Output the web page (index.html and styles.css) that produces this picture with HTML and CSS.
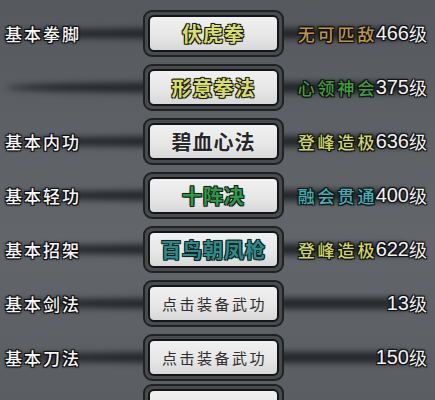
FILE: index.html
```html
<!DOCTYPE html>
<html lang="zh">
<head>
<meta charset="utf-8">
<link rel="stylesheet" href="styles.css">
</head>
<body>
<div class="list">
  <div class="row">
    <div class="label">基本拳脚</div>
    <div class="btn"><div class="face c-yellow">伏虎拳</div></div>
    <div class="value"><span class="rank r-gold">无可匹敌</span><span class="num">466</span><span class="ji">级</span></div>
  </div>
  <div class="row">
    <div class="label"></div>
    <div class="btn"><div class="face c-yellow">形意拳法</div></div>
    <div class="value"><span class="rank r-green">心领神会</span><span class="num">375</span><span class="ji">级</span></div>
  </div>
  <div class="row">
    <div class="label">基本内功</div>
    <div class="btn"><div class="face c-dark">碧血心法</div></div>
    <div class="value"><span class="rank r-lime">登峰造极</span><span class="num">636</span><span class="ji">级</span></div>
  </div>
  <div class="row">
    <div class="label">基本轻功</div>
    <div class="btn"><div class="face c-green">十阵决</div></div>
    <div class="value"><span class="rank r-teal">融会贯通</span><span class="num">400</span><span class="ji">级</span></div>
  </div>
  <div class="row">
    <div class="label">基本招架</div>
    <div class="btn"><div class="face c-teal">百鸟朝凤枪</div></div>
    <div class="value"><span class="rank r-lime">登峰造极</span><span class="num">622</span><span class="ji">级</span></div>
  </div>
  <div class="row">
    <div class="label">基本剑法</div>
    <div class="btn"><div class="face c-empty">点击装备武功</div></div>
    <div class="value"><span class="num">13</span><span class="ji">级</span></div>
  </div>
  <div class="row">
    <div class="label">基本刀法</div>
    <div class="btn"><div class="face c-empty">点击装备武功</div></div>
    <div class="value"><span class="num">150</span><span class="ji">级</span></div>
  </div>
  <div class="row row-cut">
    <div class="label"></div>
    <div class="btn"><div class="face c-empty"></div></div>
    <div class="value"></div>
  </div>
</div>
</body>
</html>
```

FILE: styles.css
```css
html, body {
  margin: 0;
  padding: 0;
}
body {
  width: 435px;
  height: 400px;
  overflow: hidden;
  background: linear-gradient(180deg, #55595d 0%, #5e6267 35%, #62666b 60%, #5a5e62 100%);
  font-family: "Noto Sans CJK SC", "Noto Sans", sans-serif;
}
.list {
  height: 400px;
  box-sizing: border-box;
  overflow: hidden;
  padding-top: 6px;
  display: flex;
  flex-direction: column;
}
.row {
  position: relative;
  height: 54px;
  flex: none;
  display: grid;
  grid-template-columns: 143px 141px 1fr;
  align-items: center;
}
.row-cut {
  height: 10px;
  align-items: start;
}
.row-cut::before {
  display: none;
}
.row::before {
  content: "";
  position: absolute;
  left: 6px;
  right: 30px;
  top: 22px;
  height: 11px;
  background: #24272a;
  border-radius: 50% 0 0 50%;
  filter: blur(3px);
}
.label, .btn, .value {
  position: relative;
}
.label {
  padding-left: 5px;
  font-size: 17px;
  font-weight: 500;
  letter-spacing: 2px;
  color: #f6f6f6;
  white-space: nowrap;
  text-shadow: 1px 1px 0 #0e0e0e, -1px -1px 0 #0e0e0e, 1px -1px 0 #0e0e0e, -1px 1px 0 #0e0e0e, 0 0 2px #000, 0 0 3px #000;
}
.btn {
  height: 47px;
  box-sizing: border-box;
  border: 2px solid #1f2123;
  border-radius: 9px;
  padding: 3px;
  background: #484b4e;
  display: flex;
}
.face {
  flex: 1;
  box-sizing: border-box;
  border: 2px solid #141516;
  border-radius: 6px;
  background: linear-gradient(180deg, #f0f0f0 0%, #e6e6e6 60%, #d8d8d8 100%);
  display: flex;
  align-items: center;
  justify-content: center;
  font-size: 20px;
  font-weight: bold;
  letter-spacing: 1px;
  white-space: nowrap;
}
.c-yellow {
  color: #d8df62;
  text-shadow: 1px 1px 0 #1c1c14, -1px -1px 0 #1c1c14, 1px -1px 0 #1c1c14, -1px 1px 0 #1c1c14, 0 0 2px #1c1c14;
}
.c-dark {
  color: #262626;
  text-shadow: 0 0 2px #fff;
}
.c-green {
  color: #2f9a44;
  text-shadow: 1px 1px 0 #10241a, -1px -1px 0 #10241a, 1px -1px 0 #10241a, -1px 1px 0 #10241a, 0 0 2px #10241a;
}
.c-teal {
  color: #2b8c8a;
  text-shadow: 1px 1px 0 #0f2222, -1px -1px 0 #0f2222, 1px -1px 0 #0f2222, -1px 1px 0 #0f2222, 0 0 2px #0f2222;
}
.c-empty {
  color: #2e2e2e;
  font-size: 15px;
  font-weight: normal;
  letter-spacing: 2.5px;
  padding-left: 2px;
}
.value {
  display: flex;
  justify-content: flex-end;
  align-items: center;
  padding-right: 8px;
  white-space: nowrap;
  text-shadow: 1px 1px 0 #111, -1px -1px 0 #111, 1px -1px 0 #111, -1px 1px 0 #111, 0 0 2px #000, 0 0 3px #000;
}
.rank {
  font-size: 17px;
  font-weight: 500;
  letter-spacing: 3px;
  margin-right: -2px;
}
.r-gold { color: #bd9640; }
.r-green { color: #3f9e3c; }
.r-lime { color: #cfd85a; }
.r-teal { color: #3fb2b6; }
.num {
  font-family: "Liberation Sans", Arial, sans-serif;
  font-size: 20px;
  color: #f2f2f2;
}
.ji {
  font-size: 18px;
  color: #f2f2f2;
}
```
